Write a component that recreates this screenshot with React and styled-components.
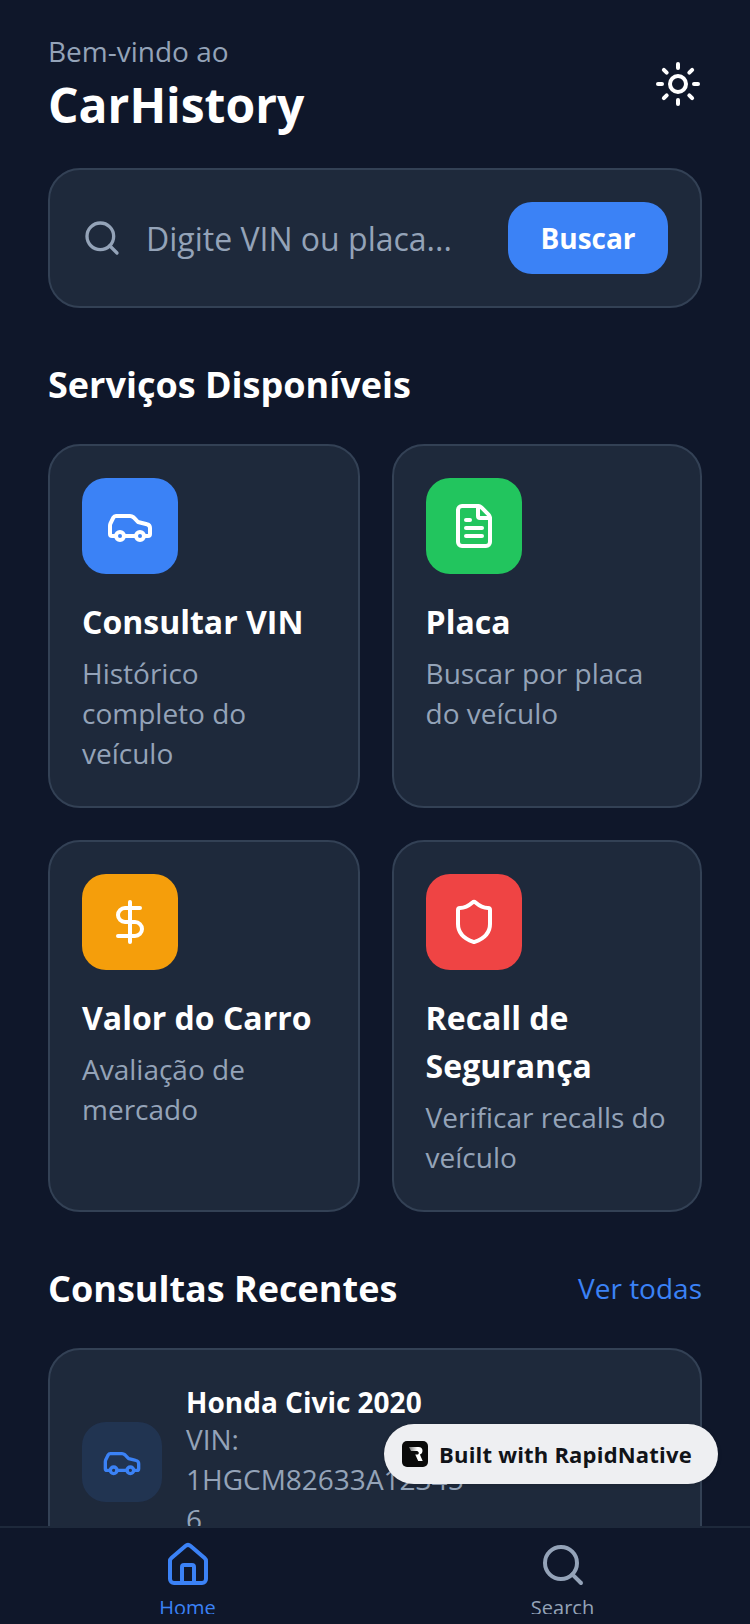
import React from "react";
import styled, { createGlobalStyle } from "styled-components";
import { Sun, Search, Car, FileText, DollarSign, Shield, House } from "lucide-react";

const Global = createGlobalStyle`
  html, body { margin: 0; padding: 0; background: #0f172a; }
  * { box-sizing: border-box; }
`;

const Screen = styled.div`
  position: relative;
  width: 750px;
  height: 1624px;
  display: flex;
  flex-direction: column;
  overflow: hidden;
  background: #0f172a;
  font-family: "Open Sans", sans-serif;
  color: #fff;
`;
const Scroll = styled.main`
  flex: 1;
  min-height: 0;
  overflow: hidden;
  padding: 32px 48px 0;
`;
const Header = styled.header`
  display: flex;
  align-items: center;
  justify-content: space-between;
  height: 104px;
  margin-bottom: 32px;
`;
const Greeting = styled.div`
  font-size: 28px;
  line-height: 40px;
  color: #94a3b8;
`;
const Brand = styled.h1`
  margin: 2px 0 0;
  font-size: 48px;
  line-height: 64px;
  font-weight: 700;
`;
const SearchCard = styled.div`
  display: flex;
  align-items: center;
  gap: 24px;
  height: 140px;
  padding: 32px;
  background: #1e293b;
  border: 2px solid #334155;
  border-radius: 32px;
  color: #94a3b8;
`;
const Placeholder = styled.div`
  flex: 1;
  padding-top: 2px;
  font-size: 32px;
  line-height: 44px;
  color: #94a3b8;
`;
const SearchButton = styled.button`
  width: 160px;
  height: 72px;
  border: 0;
  border-radius: 24px;
  background: #3b82f6;
  color: #fff;
  font: 700 28px/40px "Open Sans", sans-serif;
`;
const SectionTitle = styled.h2`
  margin: 0;
  font-size: 36px;
  line-height: 56px;
  font-weight: 700;
`;
const ServicesTitle = styled(SectionTitle)`
  margin: 49px 0 31px;
`;
const Grid = styled.div`
  display: grid;
  grid-template-columns: 311.6px 310.4px;
  gap: 32px;
`;
const Card = styled.div`
  padding: 32px 32px 33px;
  background: #1e293b;
  border: 2px solid #334155;
  border-radius: 32px;
`;
const IconBox = styled.div`
  display: flex;
  align-items: center;
  justify-content: center;
  width: 96px;
  height: 96px;
  margin-bottom: 24px;
  border-radius: 24px;
  background: ${(p) => p.$bg};
`;
const CardTitle = styled.h3`
  margin: 0 0 7px;
  font-size: 32px;
  line-height: 48px;
  font-weight: 700;
`;
const CardText = styled.p`
  margin: 0;
  font-size: 28px;
  line-height: 40px;
  color: #94a3b8;
`;
const RecentHead = styled.div`
  display: flex;
  align-items: center;
  justify-content: space-between;
  height: 56px;
  margin: 48px 0 32px;
`;
const RecentTitle = styled(SectionTitle)`
  padding-top: 2px;
`;
const SeeAll = styled.span`
  font-size: 28px;
  line-height: 40px;
  color: #3b82f6;
`;
const RecentCard = styled(Card)`
  display: flex;
  align-items: center;
  gap: 24px;
`;
const RecentIcon = styled.div`
  display: flex;
  align-items: center;
  justify-content: center;
  flex: none;
  width: 80px;
  height: 80px;
  border-radius: 24px;
  background: rgba(59, 130, 246, 0.12);
  color: #3b82f6;
`;
const RecentBody = styled.div`
  width: 285px;
  padding-bottom: 3px;
`;
const RecentName = styled.div`
  font-size: 28px;
  line-height: 40px;
  font-weight: 700;
`;
const RecentVin = styled.div`
  margin-top: -3px;
  font-size: 28px;
  line-height: 40px;
  color: #94a3b8;
  overflow-wrap: anywhere;
`;
const TabBar = styled.nav`
  display: flex;
  flex: none;
  height: 98px;
  padding-top: 13px;
  background: #0f172a;
  border-top: 2px solid #1e293b;
`;
const Tab = styled.div`
  display: flex;
  flex: 1;
  flex-direction: column;
  align-items: center;
  height: 73px;
  overflow: hidden;
  color: ${(p) => (p.$active ? "#3b82f6" : "#94a3b8")};
  svg {
    flex: none;
  }
`;
const TabLabel = styled.span`
  flex: none;
  margin-top: 5px;
  font-size: 20px;
  line-height: 28px;
`;
const Badge = styled.div`
  position: absolute;
  left: 384px;
  top: 1424px;
  display: flex;
  align-items: center;
  gap: 11px;
  width: 334px;
  height: 60px;
  padding-left: 18px;
  background: #eeeff2;
  border-radius: 30px;
  color: #111318;
  font-size: 22px;
  font-weight: 700;
  letter-spacing: 0.2px;
  line-height: 32px;
  box-shadow: 0 1px 4px rgba(0, 0, 0, 0.15);
`;

const Logo = () => (
  <svg width="26" height="26" viewBox="0 0 26 26">
    <defs>
      <linearGradient id="logoFade" x1="0" y1="0" x2="1" y2="0">
        <stop offset="0" stopColor="#777" />
        <stop offset="0.6" stopColor="#fff" />
      </linearGradient>
    </defs>
    <rect width="26" height="26" rx="5" fill="#0a0a0a" />
    <path d="M7 6h9.5c2.600 0 4 1.700 4 3.800 0 1.900-1 3.200-2.600 3.700l2.800 6.500h-4.500l-3-6.500h2.200c.9 0 1.400-.6 1.400-1.500S15.900 10 15 10H9z" fill="url(#logoFade)" />
  </svg>
);

const services = [
  { Icon: Car, bg: "#3b82f6", title: "Consultar VIN", text: "Histórico completo do veículo" },
  { Icon: FileText, bg: "#22c55e", title: "Placa", text: "Buscar por placa do veículo" },
  { Icon: DollarSign, bg: "#f59e0b", title: "Valor do Carro", text: "Avaliação de mercado" },
  { Icon: Shield, bg: "#ef4444", title: "Recall de Segurança", text: "Verificar recalls do veículo" },
];

export default function App() {
  return (
    <Screen>
      <Global />
      <Scroll>
        <Header>
          <div>
            <Greeting>Bem-vindo ao</Greeting>
            <Brand>CarHistory</Brand>
          </div>
          <Sun size={48} color="#fff" />
        </Header>
        <SearchCard>
          <Search size={40} />
          <Placeholder>Digite VIN ou placa...</Placeholder>
          <SearchButton>Buscar</SearchButton>
        </SearchCard>
        <ServicesTitle>Serviços Disponíveis</ServicesTitle>
        <Grid>
          {services.map(({ Icon, bg, title, text }) => (
            <Card key={title}>
              <IconBox $bg={bg}>
                <Icon size={48} color="#fff" />
              </IconBox>
              <CardTitle>{title}</CardTitle>
              <CardText>{text}</CardText>
            </Card>
          ))}
        </Grid>
        <RecentHead>
          <RecentTitle>Consultas Recentes</RecentTitle>
          <SeeAll>Ver todas</SeeAll>
        </RecentHead>
        <RecentCard>
          <RecentIcon>
            <Car size={40} />
          </RecentIcon>
          <RecentBody>
            <RecentName>Honda Civic 2020</RecentName>
            <RecentVin>VIN: 1HGCM82633A123456</RecentVin>
          </RecentBody>
        </RecentCard>
      </Scroll>
      <TabBar>
        <Tab $active>
          <House size={48} />
          <TabLabel>Home</TabLabel>
        </Tab>
        <Tab>
          <Search size={48} />
          <TabLabel>Search</TabLabel>
        </Tab>
      </TabBar>
      <Badge>
        <Logo />
        Built with RapidNative
      </Badge>
    </Screen>
  );
}
